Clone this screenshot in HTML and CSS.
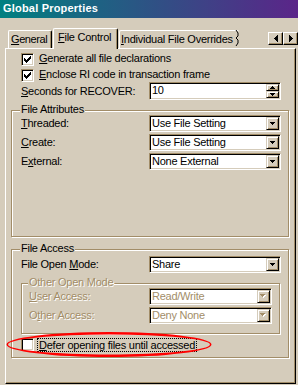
FILE: index.html
```html
<!DOCTYPE html>
<html lang="en">

<head>
    <meta charset="UTF-8">
    <meta name="viewport" content="width=device-width, initial-scale=1.0">
    <title>Global Properties</title>

    <link rel="stylesheet" href="styles.css">
</head>

<body>
    <div id="dialog">
        <div class="caption">Global Properties</div>

        <div class="tabstrip">
            <div class="tab general"><u>G</u>eneral</div>
            <div class="tab active"><u>F</u>ile Control</div>
            <div class="tab torn">
                <span><u>I</u>ndividual File Overrides</span>
                <svg class="jag" width="4" height="16" viewBox="0 0 4 16"><polyline points="1,0 3,3 3,6 1,8 3,10 3,13 1,16" fill="none" stroke="#000" stroke-width="1"/></svg>
            </div>
            <div class="scroller">
                <span class="sbtn"><svg width="4" height="7" shape-rendering="crispEdges"><path d="M3 0h1v7h-1z M2 1h1v5h-1z M1 2h1v3h-1z M0 3h1v1h-1z" fill="#000"/></svg></span>
                <span class="sbtn"><svg width="4" height="7" shape-rendering="crispEdges"><path d="M0 0h1v7h-1z M1 1h1v5h-1z M2 2h1v3h-1z M3 3h1v1h-1z" fill="#000"/></svg></span>
            </div>
        </div>

        <div class="page">
            <div class="check indent">
                <span class="box"><svg width="7" height="7" shape-rendering="crispEdges"><path d="M6 0h1v1h-1z M5 1h2v1h-2z M0 2h1v1h-1z M4 2h3v1h-3z M0 3h2v1h-2z M3 3h3v1h-3z M0 4h5v1h-5z M1 5h3v1h-3z M2 6h1v1h-1z" fill="#000"/></svg></span>
                <span class="text"><u>G</u>enerate all file declarations</span>
            </div>
            <div class="check indent second">
                <span class="box"><svg width="7" height="7" shape-rendering="crispEdges"><path d="M6 0h1v1h-1z M5 1h2v1h-2z M0 2h1v1h-1z M4 2h3v1h-3z M0 3h2v1h-2z M3 3h3v1h-3z M0 4h5v1h-5z M1 5h3v1h-3z M2 6h1v1h-1z" fill="#000"/></svg></span>
                <span class="text"><u>E</u>nclose RI code in transaction frame</span>
            </div>

            <div class="row indent">
                <span class="lbl low"><u>S</u>econds for RECOVER:</span>
                <div class="spin">
                    <span class="value">10</span>
                    <span class="spinbtns">
                        <span class="sp"><svg width="5" height="3" shape-rendering="crispEdges"><path d="M2 0h1v1h-1z M1 1h3v1h-3z M0 2h5v1h-5z" fill="#000"/></svg></span>
                        <span class="sp"><svg width="5" height="3" shape-rendering="crispEdges"><path d="M0 0h5v1h-5z M1 1h3v1h-3z M2 2h1v1h-1z" fill="#000"/></svg></span>
                    </span>
                </div>
            </div>

            <div class="group attrs">
                <div class="legend">File Attributes</div>
                <div class="row">
                    <span class="lbl"><u>T</u>hreaded:</span>
                    <div class="combo"><span class="value">Use File Setting</span><span class="drop"><svg width="5" height="3" shape-rendering="crispEdges"><path d="M0 0h5v1h-5z M1 1h3v1h-3z M2 2h1v1h-1z" fill="#000"/></svg></span></div>
                </div>
                <div class="row">
                    <span class="lbl"><u>C</u>reate:</span>
                    <div class="combo"><span class="value">Use File Setting</span><span class="drop"><svg width="5" height="3" shape-rendering="crispEdges"><path d="M0 0h5v1h-5z M1 1h3v1h-3z M2 2h1v1h-1z" fill="#000"/></svg></span></div>
                </div>
                <div class="row">
                    <span class="lbl">E<u>x</u>ternal:</span>
                    <div class="combo"><span class="value">None External</span><span class="drop"><svg width="5" height="3" shape-rendering="crispEdges"><path d="M0 0h5v1h-5z M1 1h3v1h-3z M2 2h1v1h-1z" fill="#000"/></svg></span></div>
                </div>
            </div>

            <div class="group access">
                <div class="legend">File Access</div>
                <div class="row first">
                    <span class="lbl">File Open <u>M</u>ode:</span>
                    <div class="combo"><span class="value">Share</span><span class="drop"><svg width="5" height="3" shape-rendering="crispEdges"><path d="M0 0h5v1h-5z M1 1h3v1h-3z M2 2h1v1h-1z" fill="#000"/></svg></span></div>
                </div>

                <div class="group other disabled">
                    <div class="legend">Other Open Mode</div>
                    <div class="row">
                        <span class="lbl"><u>U</u>ser Access:</span>
                        <div class="combo"><span class="value">Read/Write</span><span class="drop"><svg width="7" height="5" shape-rendering="crispEdges"><path d="M1 1h5v1h-5z M2 2h3v1h-3z M3 3h1v1h-1z" fill="#fff"/><path d="M0 0h5v1h-5z M1 1h3v1h-3z M2 2h1v1h-1z" fill="#a28d68"/></svg></span></div>
                    </div>
                    <div class="row">
                        <span class="lbl">O<u>t</u>her Access:</span>
                        <div class="combo"><span class="value">Deny None</span><span class="drop"><svg width="7" height="5" shape-rendering="crispEdges"><path d="M1 1h5v1h-5z M2 2h3v1h-3z M3 3h1v1h-1z" fill="#fff"/><path d="M0 0h5v1h-5z M1 1h3v1h-3z M2 2h1v1h-1z" fill="#a28d68"/></svg></span></div>
                    </div>
                </div>

                <div class="check defer">
                    <span class="box"></span>
                    <span class="focus"><u>D</u>efer opening files until accessed</span>
                </div>
            </div>
        </div>

        <!-- red marker drawn over the screenshot -->
        <svg class="marker" width="298" height="385" viewBox="0 0 298 385">
            <path fill="#f00" fill-rule="evenodd" d="M6.5 344.5a102.5 12.5 0 1 0 205 0a102.5 12.5 0 1 0 -205 0Z M8 344.5a101 10 0 1 0 202 0a101 10 0 1 0 -202 0Z"/>
        </svg>
    </div>
</body>

</html>
```
FILE: styles.css
```css
body {
    margin: 0;
    background-color: #d5ccbb;
    font-family: "Liberation Sans", Arial, sans-serif;
    font-size: 11px;
    letter-spacing: -0.25px;
    color: #000;
}

#dialog {
    position: relative;
    display: flex;
    flex-direction: column;
    width: 298px;
    height: 385px;
    overflow: hidden;
}

.caption {
    height: 18px;
    line-height: 16px;
    padding-left: 3px;
    background: linear-gradient(90deg, #008080 0%, #5b2589 100%);
    color: #fff;
    font-weight: bold;
    letter-spacing: 0.2px;
}

/* tabs */
.tabstrip {
    display: flex;
    align-items: flex-end;
    height: 30px;
    padding-left: 8px;
    flex: none;
}

.tab {
    box-sizing: border-box;
    height: 18px;
    padding: 2px 0 2px 2px;
    line-height: 13px;
    background-color: #d5ccbb;
    border: 1px solid #fff;
    border-bottom: 0;
    border-right-color: #000;
    border-radius: 2px 2px 0 0;
    box-shadow: inset -1px 0 0 #a28d68;
    white-space: nowrap;
}

.general {
    width: 44px;
    padding-left: 2px;
    letter-spacing: -0.4px;
}

.active {
    position: relative;
    z-index: 1;
    width: 65px;
    height: 21px;
    margin-left: 1px;
    margin-bottom: -1px;
    padding-left: 4px;
}

.torn {
    display: flex;
    width: 120px;
    margin-left: 1px;
    padding-left: 1px;
    border-right: 0;
    box-shadow: none;
}

.jag {
    margin: -3px 0 0 auto;
}

.scroller {
    display: flex;
    margin-left: auto;
    margin-bottom: 3px;
}

.sbtn {
    box-sizing: border-box;
    display: flex;
    align-items: center;
    justify-content: center;
    width: 15px;
    height: 13px;
    border: 1px solid;
    border-color: #fff #000 #000 #fff;
    box-shadow: inset -1px -1px 0 #a28d68;
}

/* page */
.page {
    flex: 1;
    display: flex;
    flex-direction: column;
    align-items: flex-start;
    margin: 0 2px 1px 5px;
    padding: 3px 0 0 5px;
    border: 1px solid #fff;
    border-right-color: #000;
    border-bottom-color: #000;
    box-shadow: inset -1px -1px 0 #a28d68;
}

.indent {
    margin-left: 10px;
}

.check {
    display: flex;
    align-items: flex-start;
    height: 14px;
    line-height: 13px;
}

.check.second {
    margin-top: 2px;
}

.box {
    box-sizing: border-box;
    display: block;
    width: 13px;
    height: 13px;
    margin-top: 1px;
    padding: 2px;
    background-color: #fff;
    border: 1px solid;
    border-color: #a28d68 #fff #fff #a28d68;
    box-shadow: inset 1px 1px 0 #000, inset -1px -1px 0 #d5ccbb;
}

.box svg {
    display: block;
}

.check .text {
    margin-left: 5px;
}

.row {
    display: flex;
    align-items: center;
    height: 17px;
    line-height: 13px;
}

.group .row + .row {
    margin-top: 2px;
}

.lbl {
    width: 128px;
    white-space: nowrap;
}

.lbl.low {
    padding-top: 2px;
}

.spin,
.combo {
    box-sizing: border-box;
    display: flex;
    align-items: center;
    width: 132px;
    height: 17px;
    padding: 0 1px 0 1px;
    background-color: #fff;
    border: 1px solid;
    border-color: #a28d68 #fff #fff #a28d68;
    box-shadow: inset 1px 1px 0 #000, inset -1px -1px 0 #d5ccbb;
}

.row .spin {
    height: 18px;
}

.value {
    flex: 1;
    padding-left: 1px;
    white-space: nowrap;
}

.drop,
.sp {
    box-sizing: border-box;
    display: flex;
    align-items: center;
    justify-content: center;
    background-color: #d5ccbb;
    border: 1px solid;
    border-color: #d5ccbb #000 #000 #d5ccbb;
    box-shadow: inset 1px 1px 0 #fff, inset -1px -1px 0 #a28d68;
}

.drop {
    width: 13px;
    height: 13px;
}

.spinbtns {
    display: flex;
    flex-direction: column;
    width: 13px;
}

.sp {
    height: 7px;
}

.drop svg,
.sp svg {
    display: block;
}

/* group boxes */
.group {
    box-sizing: border-box;
    display: flex;
    flex-direction: column;
    align-items: flex-start;
    padding-left: 9px;
    border: 1px solid #a28d68;
    box-shadow: inset 1px 1px 0 #fff, 1px 1px 0 #fff;
}

.legend {
    height: 12px;
    margin: -8px 0 0 -1px;
    padding: 0 1px;
    line-height: 12px;
    background-color: #d5ccbb;
    white-space: nowrap;
}

.attrs {
    width: 278px;
    height: 127px;
    margin-top: 11px;
}

.access {
    width: 278px;
    height: 109px;
    margin-top: 12px;
}

.access .row.first {
    margin-top: 2px;
}

.other {
    width: 259px;
    height: 51px;
    margin-top: 10px;
    padding-left: 7px;
}

.other .row:first-of-type {
    margin-top: 1px;
}

.other .lbl {
    width: 120px;
}

.other .combo {
    width: 123px;
}

.disabled .lbl,
.disabled .legend {
    color: #a28d68;
    text-shadow: 1px 1px 0 #fff;
}

.disabled .value {
    color: #a28d68;
}

.defer {
    margin-top: 4px;
}

.defer .box {
    margin-top: 0;
}

.focus {
    margin-left: 3px;
    padding: 0 1px;
    line-height: 12px;
    border: 1px dotted #000;
}

.marker {
    position: absolute;
    left: 0;
    top: 0;
    pointer-events: none;
}
```
